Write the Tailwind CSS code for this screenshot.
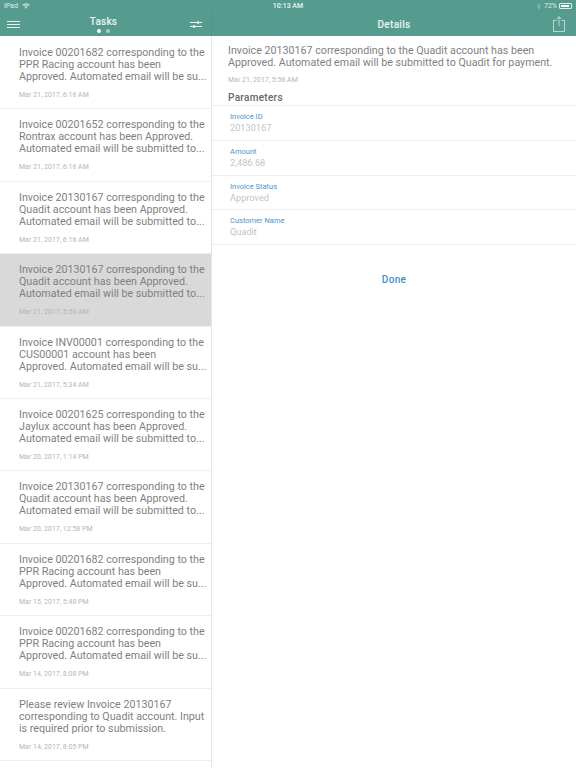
<!DOCTYPE html>
<html lang="en">
<head>
  <meta charset="UTF-8">
  <title>Tasks</title>
  <script src="https://cdn.jsdelivr.net/npm/@tailwindcss/browser@4"></script>
</head>
<body class="bg-white font-['Roboto',sans-serif] overflow-hidden">
  <div class="w-[576px] h-[768px] flex flex-col overflow-hidden">

    <!-- Header -->
    <header class="h-[36px] bg-[#559c8f] text-white shrink-0 relative">
      <div class="h-[12px] flex justify-between items-center text-[7px] px-[4px]">
        <div class="flex items-center gap-[4px] w-[100px] text-white/80">
          <span>iPad</span>
          <svg width="8" height="6" viewBox="0 0 8 6" fill="none" stroke="#ffffff" stroke-opacity="0.85"><path d="M0.5 2.2C2.5 0.4 5.5 0.4 7.5 2.2M1.8 3.4C3 2.4 5 2.4 6.2 3.4" /><path d="M4 5.8L2.9 4.5C3.5 4 4.5 4 5.1 4.5Z" fill="#ffffff" stroke="none"/></svg>
        </div>
        <span class="font-medium text-white/90">10:13 AM</span>
        <div class="flex items-center justify-end gap-[2px] w-[100px] text-white/80">
          <svg class="mr-[1px]" width="4" height="7" viewBox="0 0 4 7" fill="none" stroke="#8fc4ba" stroke-width="0.7"><path d="M0.3 1.8L3.2 4.8L1.9 6.2V0.8L3.2 2.2L0.3 5.2"/></svg>
          <span>72%</span>
          <div class="w-[13px] h-[6px] border border-white/80 rounded-[1px] p-[1px]"><div class="w-[8px] h-full bg-white"></div></div>
        </div>
      </div>
      <div class="h-[24px] flex">
        <div class="w-[211px] flex items-center justify-between pl-[7px] pr-[9px] relative">
          <svg width="13" height="7" viewBox="0 0 13 7" stroke="#ffffff" stroke-opacity="0.85"><path d="M0 0.5H13M0 3.5H13M0 6.5H13"/></svg>
          <div class="absolute left-0 right-[4px] top-[3px] flex flex-col items-center">
            <span class="text-[10px] leading-[14px] font-medium text-white/90 tracking-[0.2px]">Tasks</span>
            <div class="flex gap-[5.5px]">
              <span class="w-[3.5px] h-[3.5px] rounded-full bg-white"></span>
              <span class="w-[3.5px] h-[3.5px] rounded-full bg-white/50"></span>
            </div>
          </div>
          <svg width="12" height="9" viewBox="0 0 12 9" fill="none" stroke="#ffffff" stroke-opacity="0.9"><path d="M0 2.5H12M0 6.5H12"/><path d="M8 1V4M4 5V8" stroke-width="1.5"/></svg>
        </div>
        <div class="w-px bg-[#4f9386]"></div>
        <div class="flex-1 flex items-center justify-center relative">
          <span class="text-[10px] font-medium text-white/90 tracking-[0.3px]">Details</span>
          <svg class="absolute right-[11px] top-[4px]" width="12" height="16" viewBox="0 0 12 16" fill="none" stroke="#ffffff" stroke-opacity="0.6"><path d="M3.5 4.5H0.5V15.5H11.5V4.5H8.5M6 10V0.8M3.5 3L6 0.8L8.5 3"/></svg>
        </div>
      </div>
    </header>

    <div class="flex-1 flex min-h-0">
      <!-- Task list -->
      <aside class="w-[212px] shrink-0 pt-[1px] border-r border-[#e6e6e6] overflow-hidden text-[#7f7f7f]">
        <div class="h-[72.4px] pl-[19px] pt-[10px] border-b border-[#efefef]">
          <p class="text-[10.7px] leading-[12px] whitespace-nowrap">Invoice 00201682 corresponding to the<br>PPR Racing account has been<br>Approved. Automated email will be su...</p>
          <p class="text-[7px] leading-[9px] mt-[8px] text-[#b5b5b5]">Mar 21, 2017, 6:16 AM</p>
        </div>
        <div class="h-[72.4px] pl-[19px] pt-[10px] border-b border-[#efefef]">
          <p class="text-[10.7px] leading-[12px] whitespace-nowrap">Invoice 00201652 corresponding to the<br>Rontrax account has been Approved.<br>Automated email will be submitted to...</p>
          <p class="text-[7px] leading-[9px] mt-[8px] text-[#b5b5b5]">Mar 21, 2017, 6:16 AM</p>
        </div>
        <div class="h-[72.4px] pl-[19px] pt-[10px] border-b border-[#efefef]">
          <p class="text-[10.7px] leading-[12px] whitespace-nowrap">Invoice 20130167 corresponding to the<br>Quadit account has been Approved.<br>Automated email will be submitted to...</p>
          <p class="text-[7px] leading-[9px] mt-[8px] text-[#b5b5b5]">Mar 21, 2017, 6:16 AM</p>
        </div>
        <div class="h-[72.4px] pl-[19px] pt-[10px] bg-[#d9d9d9] border-b border-[#efefef]">
          <p class="text-[10.7px] leading-[12px] whitespace-nowrap">Invoice 20130167 corresponding to the<br>Quadit account has been Approved.<br>Automated email will be submitted to...</p>
          <p class="text-[7px] leading-[9px] mt-[8px] text-[#b5b5b5]">Mar 21, 2017, 5:56 AM</p>
        </div>
        <div class="h-[72.4px] pl-[19px] pt-[10px] border-b border-[#efefef]">
          <p class="text-[10.7px] leading-[12px] whitespace-nowrap">Invoice INV00001 corresponding to the<br>CUS00001 account has been<br>Approved. Automated email will be su...</p>
          <p class="text-[7px] leading-[9px] mt-[8px] text-[#b5b5b5]">Mar 21, 2017, 5:34 AM</p>
        </div>
        <div class="h-[72.4px] pl-[19px] pt-[10px] border-b border-[#efefef]">
          <p class="text-[10.7px] leading-[12px] whitespace-nowrap">Invoice 00201625 corresponding to the<br>Jaylux account has been Approved.<br>Automated email will be submitted to...</p>
          <p class="text-[7px] leading-[9px] mt-[8px] text-[#b5b5b5]">Mar 20, 2017, 1:14 PM</p>
        </div>
        <div class="h-[72.4px] pl-[19px] pt-[10px] border-b border-[#efefef]">
          <p class="text-[10.7px] leading-[12px] whitespace-nowrap">Invoice 20130167 corresponding to the<br>Quadit account has been Approved.<br>Automated email will be submitted to...</p>
          <p class="text-[7px] leading-[9px] mt-[8px] text-[#b5b5b5]">Mar 20, 2017, 12:58 PM</p>
        </div>
        <div class="h-[72.4px] pl-[19px] pt-[10px] border-b border-[#efefef]">
          <p class="text-[10.7px] leading-[12px] whitespace-nowrap">Invoice 00201682 corresponding to the<br>PPR Racing account has been<br>Approved. Automated email will be su...</p>
          <p class="text-[7px] leading-[9px] mt-[8px] text-[#b5b5b5]">Mar 15, 2017, 5:48 PM</p>
        </div>
        <div class="h-[72.4px] pl-[19px] pt-[10px] border-b border-[#efefef]">
          <p class="text-[10.7px] leading-[12px] whitespace-nowrap">Invoice 00201682 corresponding to the<br>PPR Racing account has been<br>Approved. Automated email will be su...</p>
          <p class="text-[7px] leading-[9px] mt-[8px] text-[#b5b5b5]">Mar 14, 2017, 8:08 PM</p>
        </div>
        <div class="h-[72.4px] pl-[19px] pt-[10px] border-b border-[#efefef]">
          <p class="text-[10.7px] leading-[12px] whitespace-nowrap">Please review Invoice 20130167<br>corresponding to Quadit account. Input<br>is required prior to submission.</p>
          <p class="text-[7px] leading-[9px] mt-[8px] text-[#b5b5b5]">Mar 14, 2017, 8:05 PM</p>
        </div>
      </aside>

      <!-- Details -->
      <main class="flex-1 min-w-0">
        <div class="pl-[16px] pt-[9px]">
          <p class="text-[10.7px] leading-[12px] text-[#7f7f7f] whitespace-nowrap">Invoice 20130167 corresponding to the Quadit account has been<br>Approved. Automated email will be submitted to Quadit for payment.</p>
          <p class="text-[7px] leading-[9px] mt-[7px] text-[#b5b5b5]">Mar 21, 2017, 5:56 AM</p>
          <h2 class="text-[10px] leading-[14px] mt-[6px] text-[#666666] font-medium tracking-[0.3px]">Parameters</h2>
        </div>
        <dl class="border-t border-[#efefef]">
          <div class="h-[34.8px] pl-[18px] pt-[6px] border-b border-[#efefef]">
            <dt class="text-[7.5px] leading-[10px] text-[#4a94c9]">Invoice ID</dt>
            <dd class="text-[9.2px] leading-[11px] text-[#c4c4c4]">20130167</dd>
          </div>
          <div class="h-[34.8px] pl-[18px] pt-[6px] border-b border-[#efefef]">
            <dt class="text-[7.5px] leading-[10px] text-[#4a94c9]">Amount</dt>
            <dd class="text-[9.2px] leading-[11px] text-[#c4c4c4]">2,486.68</dd>
          </div>
          <div class="h-[34.8px] pl-[18px] pt-[6px] border-b border-[#efefef]">
            <dt class="text-[7.5px] leading-[10px] text-[#4a94c9]">Invoice Status</dt>
            <dd class="text-[9.2px] leading-[11px] text-[#c4c4c4]">Approved</dd>
          </div>
          <div class="h-[34.8px] pl-[18px] pt-[6px] border-b border-[#efefef]">
            <dt class="text-[7.5px] leading-[10px] text-[#4a94c9]">Customer Name</dt>
            <dd class="text-[9.2px] leading-[11px] text-[#c4c4c4]">Quadit</dd>
          </div>
        </dl>
        <div class="text-center mt-[21px]">
          <button class="text-[10px] leading-[14px] font-medium text-[#3f8fc6] tracking-[0.3px]">Done</button>
        </div>
      </main>
    </div>
  </div>
</body>
</html>
